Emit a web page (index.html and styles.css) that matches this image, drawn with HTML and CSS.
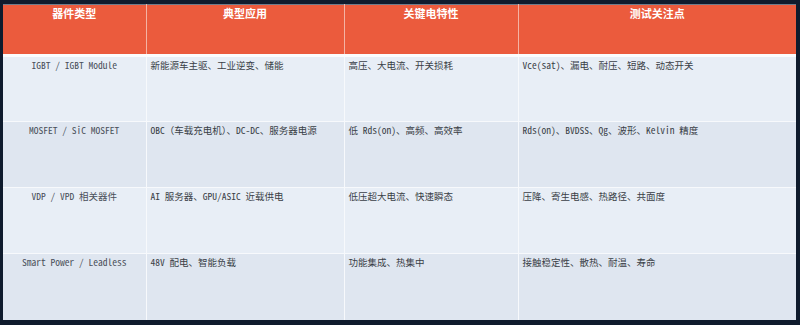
FILE: index.html
```html
<!DOCTYPE html>
<html lang="zh">
<head>
<meta charset="utf-8">
<link rel="stylesheet" href="styles.css">
</head>
<body>
<table class="spec">
  <colgroup>
    <col class="c1"><col class="c2"><col class="c3"><col class="c4">
  </colgroup>
  <thead>
    <tr><th>器件类型</th><th>典型应用</th><th>关键电特性</th><th>测试关注点</th></tr>
  </thead>
  <tbody>
    <tr class="odd"><td class="type">IGBT / IGBT Module</td><td>新能源车主驱、工业逆变、储能</td><td>高压、大电流、开关损耗</td><td>Vce(sat)、漏电、耐压、短路、动态开关</td></tr>
    <tr class="even"><td class="type">MOSFET / SiC MOSFET</td><td>OBC（车载充电机）、DC-DC、服务器电源</td><td>低 Rds(on)、高频、高效率</td><td>Rds(on)、BVDSS、Qg、波形、Kelvin 精度</td></tr>
    <tr class="odd"><td class="type">VDP / VPD 相关器件</td><td>AI 服务器、GPU/ASIC 近载供电</td><td>低压超大电流、快速瞬态</td><td>压降、寄生电感、热路径、共面度</td></tr>
    <tr class="even"><td class="type">Smart Power / Leadless</td><td>48V 配电、智能负载</td><td>功能集成、热集中</td><td>接触稳定性、散热、耐温、寿命</td></tr>
  </tbody>
</table>
</body>
</html>
```

FILE: styles.css
```css
html, body {
  margin: 0;
  background: #0f1b2d;
}
body {
  padding: 4px 4px 4px 3px;
  font-family: "Noto Sans Mono CJK SC", "Noto Sans CJK SC", "Liberation Mono", monospace;
}
.spec {
  border-collapse: collapse;
  table-layout: fixed;
  width: 793px;
  border-top: 1px solid #6f7c8c;
}
.c1 { width: 143px; }
.c2 { width: 198px; }
.c3 { width: 174px; }
.c4 { width: 278px; }
.spec th {
  background: #eb5b3d;
  color: #ffffff;
  font-size: 11px;
  font-weight: 700;
  line-height: 14px;
  height: 51px;
  padding: 1px 4px 0;
  box-sizing: border-box;
  vertical-align: top;
  text-align: center;
  border-left: 1px solid #f4b3a4;
  border-bottom: 3px solid #fbfcfd;
}
.spec th:first-child { border-left: none; }
.spec td {
  font-size: 9.5px;
  line-height: 12px;
  color: #3a3f47;
  height: 66px;
  box-sizing: border-box;
  padding: 2px 4px 0;
  vertical-align: top;
  border-left: 1px solid #f7f9fc;
  border-top: 1px solid #f7f9fc;
  white-space: nowrap;
}
.spec td:first-child { border-left: none; }
.spec td.type {
  text-align: center;
  color: #4a505a;
}
.odd td { background: #e8eef6; }
.even td { background: #dfe6f0; }
```
